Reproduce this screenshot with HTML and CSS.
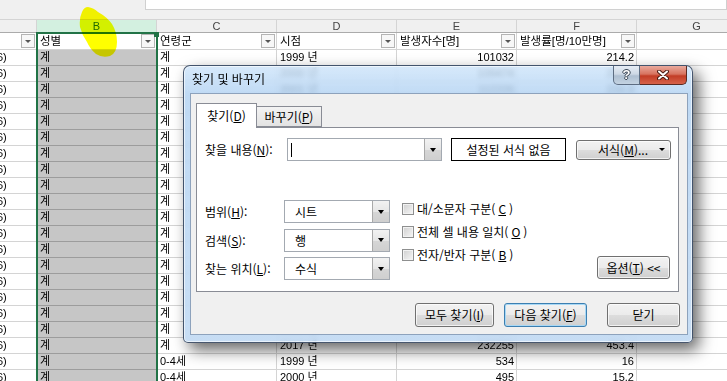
FILE: index.html
```html
<!DOCTYPE html>
<html lang="ko">
<head>
    <meta charset="UTF-8">
    <title>찾기 및 바꾸기</title>
    <link rel="stylesheet" href="styles.css">
</head>
<body>
    <div class="sheet">
        <div class="topbar"><div class="formula"></div></div>

        <div class="colheads">
            <div class="head col-a"></div>
            <div class="head col sel-head">B</div>
            <div class="head col">C</div>
            <div class="head col">D</div>
            <div class="head col">E</div>
            <div class="head col">F</div>
            <div class="head col">G</div>
        </div>

        <div class="row filter-row">
            <div class="cell col-a"><span class="fbtn"></span></div>
            <div class="cell col">성별<span class="fbtn"></span></div>
            <div class="cell col">연령군<span class="fbtn"></span></div>
            <div class="cell col">시점<span class="fbtn"></span></div>
            <div class="cell col">발생자수[명]<span class="fbtn"></span></div>
            <div class="cell col">발생률[명/10만명]<span class="fbtn"></span></div>
            <div class="cell col"></div>
        </div>

        <div class="row"><div class="cell col-a"><span class="cut">6)</span></div><div class="cell col sel">계</div><div class="cell col">계</div><div class="cell col">1999 년</div><div class="cell col num">101032</div><div class="cell col num">214.2</div><div class="cell col"></div></div>
        <div class="row"><div class="cell col-a"><span class="cut">6)</span></div><div class="cell col sel">계</div><div class="cell col">계</div><div class="cell col">2000 년</div><div class="cell col num">109474</div><div class="cell col num">230.5</div><div class="cell col"></div></div>
        <div class="row"><div class="cell col-a"><span class="cut">6)</span></div><div class="cell col sel">계</div><div class="cell col">계</div><div class="cell col">2001 년</div><div class="cell col num">112226</div><div class="cell col num">234.8</div><div class="cell col"></div></div>
        <div class="row"><div class="cell col-a"><span class="cut">6)</span></div><div class="cell col sel">계</div><div class="cell col">계</div><div class="cell col">2002 년</div><div class="cell col num">117632</div><div class="cell col num">244.9</div><div class="cell col"></div></div>
        <div class="row"><div class="cell col-a"><span class="cut">6)</span></div><div class="cell col sel">계</div><div class="cell col">계</div><div class="cell col">2003 년</div><div class="cell col num">125707</div><div class="cell col num">260.6</div><div class="cell col"></div></div>
        <div class="row"><div class="cell col-a"><span class="cut">6)</span></div><div class="cell col sel">계</div><div class="cell col">계</div><div class="cell col">2004 년</div><div class="cell col num">134118</div><div class="cell col num">276.9</div><div class="cell col"></div></div>
        <div class="row"><div class="cell col-a"><span class="cut">6)</span></div><div class="cell col sel">계</div><div class="cell col">계</div><div class="cell col">2005 년</div><div class="cell col num">145858</div><div class="cell col num">300.1</div><div class="cell col"></div></div>
        <div class="row"><div class="cell col-a"><span class="cut">6)</span></div><div class="cell col sel">계</div><div class="cell col">계</div><div class="cell col">2006 년</div><div class="cell col num">153981</div><div class="cell col num">315.3</div><div class="cell col"></div></div>
        <div class="row"><div class="cell col-a"><span class="cut">6)</span></div><div class="cell col sel">계</div><div class="cell col">계</div><div class="cell col">2007 년</div><div class="cell col num">164840</div><div class="cell col num">335.6</div><div class="cell col"></div></div>
        <div class="row"><div class="cell col-a"><span class="cut">6)</span></div><div class="cell col sel">계</div><div class="cell col">계</div><div class="cell col">2008 년</div><div class="cell col num">180480</div><div class="cell col num">365.2</div><div class="cell col"></div></div>
        <div class="row"><div class="cell col-a"><span class="cut">6)</span></div><div class="cell col sel">계</div><div class="cell col">계</div><div class="cell col">2009 년</div><div class="cell col num">195030</div><div class="cell col num">392.4</div><div class="cell col"></div></div>
        <div class="row"><div class="cell col-a"><span class="cut">6)</span></div><div class="cell col sel">계</div><div class="cell col">계</div><div class="cell col">2010 년</div><div class="cell col num">205860</div><div class="cell col num">411.8</div><div class="cell col"></div></div>
        <div class="row"><div class="cell col-a"><span class="cut">6)</span></div><div class="cell col sel">계</div><div class="cell col">계</div><div class="cell col">2011 년</div><div class="cell col num">219447</div><div class="cell col num">436.4</div><div class="cell col"></div></div>
        <div class="row"><div class="cell col-a"><span class="cut">6)</span></div><div class="cell col sel">계</div><div class="cell col">계</div><div class="cell col">2012 년</div><div class="cell col num">226107</div><div class="cell col num">447.4</div><div class="cell col"></div></div>
        <div class="row"><div class="cell col-a"><span class="cut">6)</span></div><div class="cell col sel">계</div><div class="cell col">계</div><div class="cell col">2013 년</div><div class="cell col num">227188</div><div class="cell col num">447.5</div><div class="cell col"></div></div>
        <div class="row"><div class="cell col-a"><span class="cut">6)</span></div><div class="cell col sel">계</div><div class="cell col">계</div><div class="cell col">2014 년</div><div class="cell col num">218954</div><div class="cell col num">429.4</div><div class="cell col"></div></div>
        <div class="row"><div class="cell col-a"><span class="cut">6)</span></div><div class="cell col sel">계</div><div class="cell col">계</div><div class="cell col">2015 년</div><div class="cell col num">217057</div><div class="cell col num">423.9</div><div class="cell col"></div></div>
        <div class="row"><div class="cell col-a"><span class="cut">6)</span></div><div class="cell col sel">계</div><div class="cell col">계</div><div class="cell col">2016 년</div><div class="cell col num">229180</div><div class="cell col num">446.5</div><div class="cell col"></div></div>
        <div class="row"><div class="cell col-a"><span class="cut">6)</span></div><div class="cell col sel">계</div><div class="cell col">계</div><div class="cell col">2017 년</div><div class="cell col num">232255</div><div class="cell col num">453.4</div><div class="cell col"></div></div>
        <div class="row"><div class="cell col-a"><span class="cut">6)</span></div><div class="cell col sel">계</div><div class="cell col">0-4세</div><div class="cell col">1999 년</div><div class="cell col num">534</div><div class="cell col num">16</div><div class="cell col"></div></div>
        <div class="row"><div class="cell col-a"><span class="cut">6)</span></div><div class="cell col sel">계</div><div class="cell col">0-4세</div><div class="cell col">2000 년</div><div class="cell col num">495</div><div class="cell col num">15.2</div><div class="cell col"></div></div>

        <!-- selection frame on column B -->
        <div class="selection"><span class="handle"></span></div>

        <!-- yellow marker scribble -->
        <svg class="marker" width="42" height="52" viewBox="0 0 42 52">
            <path d="M10 1 Q16 2 20 6 Q29 11 34 18 Q39 26 39 36 Q39 47 32 50 Q24 52 18 48 Q12 43 9 36 Q4 29 2 21 Q1 12 4 6 Q6 1 10 1 Z" fill="#ffff00"/>
        </svg>

        <!-- find & replace dialog -->
        <div class="dlg">
            <div class="dlg-title">
                <span class="dlg-caption">찾기 및 바꾸기</span>
                <div class="caption-btns">
                    <span class="cap-help">?</span>
                    <span class="cap-close">
                        <svg width="12" height="10" viewBox="0 0 12 10">
                            <path d="M2 1.5 L10 8.5 M10 1.5 L2 8.5" stroke="#4a1a12" stroke-width="4" stroke-linecap="round"/>
                            <path d="M2 1.5 L10 8.5 M10 1.5 L2 8.5" stroke="#fff" stroke-width="2" stroke-linecap="round"/>
                        </svg>
                    </span>
                </div>
            </div>

            <div class="dlg-client">
                <div class="tabs">
                    <div class="tab active">찾기(<u>D</u>)</div>
                    <div class="tab">바꾸기(<u>P</u>)</div>
                </div>

                <div class="panel">
                    <div class="find-row">
                        <span class="lbl lbl-find">찾을 내용(<u>N</u>):</span>
                        <div class="combo find"><span class="val"><span class="caret"></span></span><span class="drop"></span></div>
                        <div class="fmt-box">설정된 서식 없음</div>
                        <div class="btn fmt-btn"><span>서식(<u>M</u>)...</span><span class="small-arrow"></span></div>
                    </div>

                    <div class="opt-row">
                        <div class="opt-grid">
                            <span class="lbl">범위(<u>H</u>):</span>
                            <div class="combo"><span class="val">시트</span><span class="drop"></span></div>
                            <span class="lbl">검색(<u>S</u>):</span>
                            <div class="combo"><span class="val">행</span><span class="drop"></span></div>
                            <span class="lbl">찾는 위치(<u>L</u>):</span>
                            <div class="combo"><span class="val">수식</span><span class="drop"></span></div>
                        </div>
                        <div class="checks">
                            <div class="check-row"><span class="box"></span>대/소문자 구분(<u>C</u>)</div>
                            <div class="check-row"><span class="box"></span>전체 셀 내용 일치(<u>O</u>)</div>
                            <div class="check-row"><span class="box"></span>전자/반자 구분(<u>B</u>)</div>
                        </div>
                        <div class="btn opt-btn">옵션(<u>T</u>) &lt;&lt;</div>
                    </div>
                </div>

                <div class="dlg-buttons">
                    <div class="btn b-all">모두 찾기(<u>I</u>)</div>
                    <div class="btn b-next focus">다음 찾기(<u>F</u>)</div>
                    <div class="btn b-close">닫기</div>
                </div>
            </div>
        </div>
    </div>
</body>
</html>
```

FILE: styles.css
```css
/* Base */
* {
    margin: 0;
    padding: 0;
    box-sizing: border-box;
}

body {
    width: 727px;
    height: 381px;
    overflow: hidden;
    background: #fff;
    color: #000;
    font-family: "Noto Sans CJK KR", sans-serif;
    font-size: 12px;
}

/* Feuille */
.sheet {
    position: relative;
    height: 381px;
    overflow: hidden;
    font-family: "Liberation Sans", "Noto Sans CJK KR", sans-serif;
    font-size: 11px;
}

.topbar {
    height: 20px;
    background: #f0f0f0;
    border-bottom: 1px solid #d4d4d4;
    padding-left: 145px;
}

.formula {
    height: 10px;
    background: #fff;
    border: 1px solid #d0d0d0;
    border-top: none;
}

.colheads {
    display: flex;
    height: 13px;
    background: #f0f0f0;
    border-bottom: 1px solid #ababab;
}

.head {
    text-align: center;
    line-height: 12px;
    color: #444;
    border-right: 1px solid #d4d4d4;
}

.head.sel-head {
    background: #d3f0e0;
    color: #1e6b41;
}

.col-a {
    width: 37px;
    flex-shrink: 0;
}

.col {
    width: 120px;
    flex-shrink: 0;
}

.row {
    display: flex;
    height: 16px;
}

.cell {
    border-right: 1px solid #d4d4d4;
    border-bottom: 1px solid #d4d4d4;
    line-height: 15px;
    padding: 0 2px 0 3px;
    overflow: hidden;
    white-space: nowrap;
}

.cell.col-a {
    padding: 0;
}

.cut {
    display: inline-block;
    margin-left: -3px;
}

.cell.sel {
    background: #c6c6c6;
    border-bottom-color: #9c9c9c;
}

.num {
    text-align: right;
}

.filter-row {
    height: 17px;
}

.filter-row .cell {
    display: flex;
    align-items: center;
    font-size: 11.5px;
    padding-right: 1px;
}

.fbtn {
    margin-left: auto;
    width: 14px;
    height: 14px;
    border: 1px solid #b4b4b4;
    background: #f7f7f7;
    display: flex;
    align-items: center;
    justify-content: center;
}

.fbtn::after {
    content: "";
    border-left: 3px solid transparent;
    border-right: 3px solid transparent;
    border-top: 3px solid #555;
}

.selection {
    position: absolute;
    left: 36px;
    top: 32px;
    width: 122px;
    height: 360px;
    border: 2px solid #217346;
}

.handle {
    position: absolute;
    right: -3px;
    top: -2px;
    width: 5px;
    height: 5px;
    background: #217346;
}

.marker {
    position: absolute;
    left: 78px;
    top: 6px;
    mix-blend-mode: multiply;
}

/* Boîte de dialogue */
.dlg {
    position: absolute;
    left: 183px;
    top: 65px;
    width: 510px;
    height: 278px;
    display: flex;
    flex-direction: column;
    border: 1px solid rgba(35, 50, 75, 0.8);
    border-radius: 7px 7px 5px 5px;
    background: linear-gradient(180deg, rgba(205, 228, 250, 0.8) 0%, rgba(178, 210, 242, 0.82) 28px, rgba(190, 216, 243, 0.85) 100%);
    backdrop-filter: blur(2.5px);
    box-shadow: 6px 7px 16px rgba(0, 0, 0, 0.6), inset 0 0 0 1px rgba(255, 255, 255, 0.6);
    font-family: "Noto Sans CJK KR", sans-serif;
    font-size: 12px;
}

.dlg-title {
    height: 27px;
    display: flex;
}

.dlg-caption {
    padding-left: 8px;
    line-height: 25px;
}

.caption-btns {
    margin-left: auto;
    margin-right: 5px;
    display: flex;
    height: 19px;
}

.cap-help {
    width: 27px;
    border: 1px solid #5d6d82;
    border-top: none;
    border-radius: 0 0 0 5px;
    background: linear-gradient(180deg, #e6edf5 0%, #cdd8e5 45%, #aebfd1 55%, #c4d3e2 100%);
    color: #fff;
    font-family: "Liberation Sans", sans-serif;
    font-weight: bold;
    font-size: 13px;
    line-height: 18px;
    text-align: center;
    text-shadow: 1px 0 #3a4656, -1px 0 #3a4656, 0 1px #3a4656, 0 -1px #3a4656;
}

.cap-close {
    width: 47px;
    border: 1px solid #5a2a22;
    border-left: none;
    border-top: none;
    border-radius: 0 0 5px 0;
    background: linear-gradient(180deg, #e9a99c 0%, #d7735f 45%, #c23d26 55%, #d6624a 100%);
    display: flex;
    align-items: center;
    justify-content: center;
}

.dlg-client {
    flex: 1;
    margin: 0 4px 7px 6px;
    background: #f0f0f0;
    border: 1px solid #8da2bc;
    padding: 9px 8px 0 5px;
}

/* Onglets */
.tabs {
    display: flex;
    align-items: flex-end;
    height: 25px;
    margin-bottom: -1px;
    position: relative;
    z-index: 1;
}

.tab {
    width: 65px;
    height: 21px;
    margin-bottom: 1px;
    border: 1px solid #898c95;
    border-left: none;
    background: linear-gradient(180deg, #f3f3f3, #e3e3e3);
    text-align: center;
    line-height: 19px;
}

.tab.active {
    width: 61px;
    height: 25px;
    margin-bottom: 0;
    border-left: 1px solid #898c95;
    border-bottom: none;
    background: #fff;
    line-height: 24px;
}

.panel {
    height: 165px;
    background: #fff;
    border: 1px solid #898c95;
    padding: 10px 0 0 8px;
}

.find-row {
    display: flex;
    align-items: center;
    height: 23px;
}

.lbl-find {
    width: 82px;
}

.combo {
    display: flex;
    height: 23px;
    border: 1px solid #a3a9b1;
    background: #fff;
}

.combo.find {
    width: 155px;
}

.combo .val {
    flex: 1;
    padding-left: 10px;
    line-height: 21px;
}

.combo.find .val {
    padding-left: 3px;
    display: flex;
    align-items: center;
}

.caret {
    width: 1px;
    height: 14px;
    background: #000;
}

.drop {
    width: 17px;
    border-left: 1px solid #a9a9a9;
    background: linear-gradient(180deg, #f2f2f2 0%, #e6e6e6 50%, #d6d6d6 51%, #cfcfcf 100%);
    display: flex;
    align-items: center;
    justify-content: center;
}

.drop::after {
    content: "";
    border-left: 3.5px solid transparent;
    border-right: 3.5px solid transparent;
    border-top: 4px solid #000;
}

.fmt-box {
    margin-left: 9px;
    width: 115px;
    height: 23px;
    border: 1px solid #000;
    text-align: center;
    line-height: 21px;
}

.btn {
    height: 24px;
    border: 1px solid #707070;
    border-radius: 3px;
    background: linear-gradient(180deg, #f2f2f2 0%, #ebebeb 50%, #dddddd 51%, #cfcfcf 100%);
    box-shadow: inset 0 0 0 1px rgba(255, 255, 255, 0.7);
    text-align: center;
    line-height: 22px;
}

.fmt-btn {
    margin-left: 10px;
    width: 95px;
    height: 20px;
    line-height: 18px;
    display: flex;
    padding-left: 21px;
}

.small-arrow {
    margin-left: auto;
    margin-right: 5px;
    align-self: center;
    border-left: 3px solid transparent;
    border-right: 3px solid transparent;
    border-top: 3px solid #000;
}

.opt-row {
    display: flex;
    margin-top: 39px;
}

.opt-grid {
    display: grid;
    grid-template-columns: 79px 106px;
    grid-auto-rows: 23px;
    row-gap: 5.5px;
    align-items: center;
}

.checks {
    margin-left: 12px;
    margin-top: -3px;
}

.check-row {
    height: 23px;
    display: flex;
    align-items: center;
    gap: 3px;
}

.box {
    width: 12px;
    height: 12px;
    border: 1px solid #8e8f8f;
    background: linear-gradient(135deg, #cfcfcf, #f6f6f6);
    box-shadow: inset 0 0 0 1px #f2f2f2;
}

.opt-btn {
    margin-left: auto;
    margin-right: 8px;
    margin-bottom: 1px;
    align-self: flex-end;
    width: 73px;
    height: 23px;
    line-height: 21px;
}

/* Boutons du bas */
.dlg-buttons {
    display: flex;
    justify-content: flex-end;
    margin-top: 11px;
    margin-right: -1px;
}

.b-all {
    width: 79px;
}

.b-next {
    width: 83px;
    margin-left: 10px;
}

.b-close {
    width: 73px;
    margin-left: 20px;
}

.btn.focus {
    border-color: #3c7fb1;
    box-shadow: inset 0 0 0 1px #a8d8f5;
}
```
